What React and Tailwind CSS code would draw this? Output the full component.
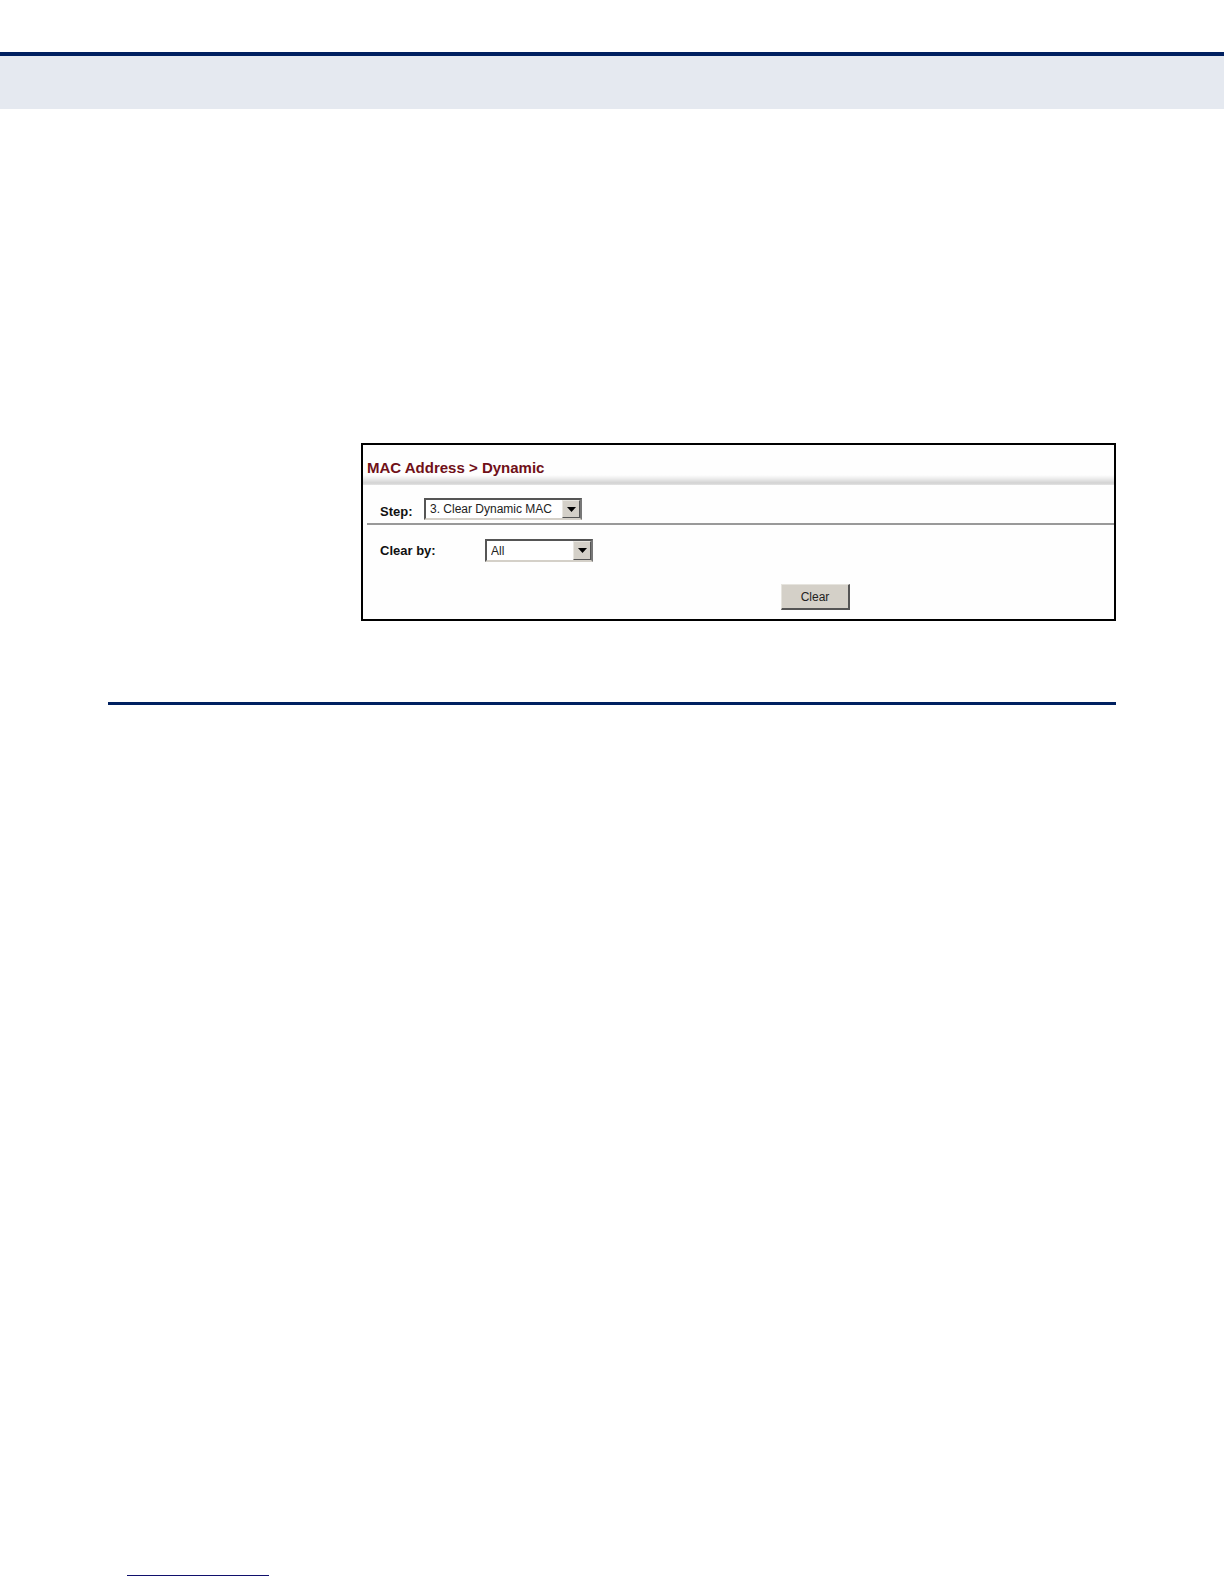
function Dropdown({ id, className, options }) {
  return (
    <div className={"relative border-2 border-[#555] border-r-[#777] border-b-[#d4d0c8] bg-white " + className}>
      <select
        id={id}
        className="block h-full w-full appearance-none bg-transparent pr-5 pl-1 text-xs leading-4 text-[#222] outline-none"
      >
        {options.map((option) => (
          <option key={option}>{option}</option>
        ))}
      </select>
      <span className="pointer-events-none absolute inset-y-0 right-0 flex w-[18px] items-center justify-center border border-t-[#e8e6e0] border-r-[#555] border-b-[#555] border-l-[#e8e6e0] bg-[#d4d0c8]">
        <svg width="9" height="5" viewBox="0 0 9 5" aria-hidden="true">
          <path d="M0 0h9L4.5 5z" fill="#000" />
        </svg>
      </span>
    </div>
  );
}

export default function App() {
  return (
    <div className="flex min-h-screen flex-col bg-white font-['Liberation_Sans',Arial,sans-serif] text-[#111]">
      <header className="mt-[52px] h-[57px] border-t-4 border-[#002060] bg-[#e5e9f0]" />

      <main className="mt-[334px] px-[108px]">
        <section className="ml-[253px] border-2 border-black bg-[#fefefe] pb-[9px]">
          <h1 className="h-10 bg-[linear-gradient(to_bottom,transparent_30px,#f0f0f0_33px,#d2d2d2_38px,#e4e4e4_40px)] pt-[13px] pl-1 text-[15px] leading-5 font-bold text-[#701018]">
            MAC Address &gt; Dynamic
          </h1>
          <form onSubmit={(event) => event.preventDefault()}>
            <div className="ml-1 flex items-start border-b-2 border-[#999] pt-[13px] pb-[3px] pl-[13px]">
              <label htmlFor="step" className="w-11 pt-[6px] text-[13px] leading-4 font-bold">
                Step:
              </label>
              <Dropdown
                id="step"
                className="h-[22px] w-[158px]"
                options={["3. Clear Dynamic MAC"]}
              />
            </div>
            <div className="mt-[14px] flex items-center pl-[17px]">
              <label htmlFor="clear-by" className="w-[105px] text-[13px] leading-4 font-bold">
                Clear by:
              </label>
              <Dropdown
                id="clear-by"
                className="h-[23px] w-[108px]"
                options={["All"]}
              />
            </div>
            <div className="mt-[22px] flex justify-center pl-[154px]">
              <button
                type="submit"
                className="h-[26px] w-[69px] border-t border-r-2 border-b-2 border-l border-t-[#e6e4de] border-r-[#555] border-b-[#555] border-l-[#e6e4de] bg-[#d4d0c8] text-xs leading-4 text-[#222]"
              >
                Clear
              </button>
            </div>
          </form>
        </section>
        <hr className="mt-[81px] border-t-[3px] border-[#002060]" />
      </main>

      <footer className="mt-auto px-[127px] pb-2">
        <a href="#top" aria-label="Back to top" className="block h-4 w-[142px] border-b border-[#10106c]" />
      </footer>
    </div>
  );
}
